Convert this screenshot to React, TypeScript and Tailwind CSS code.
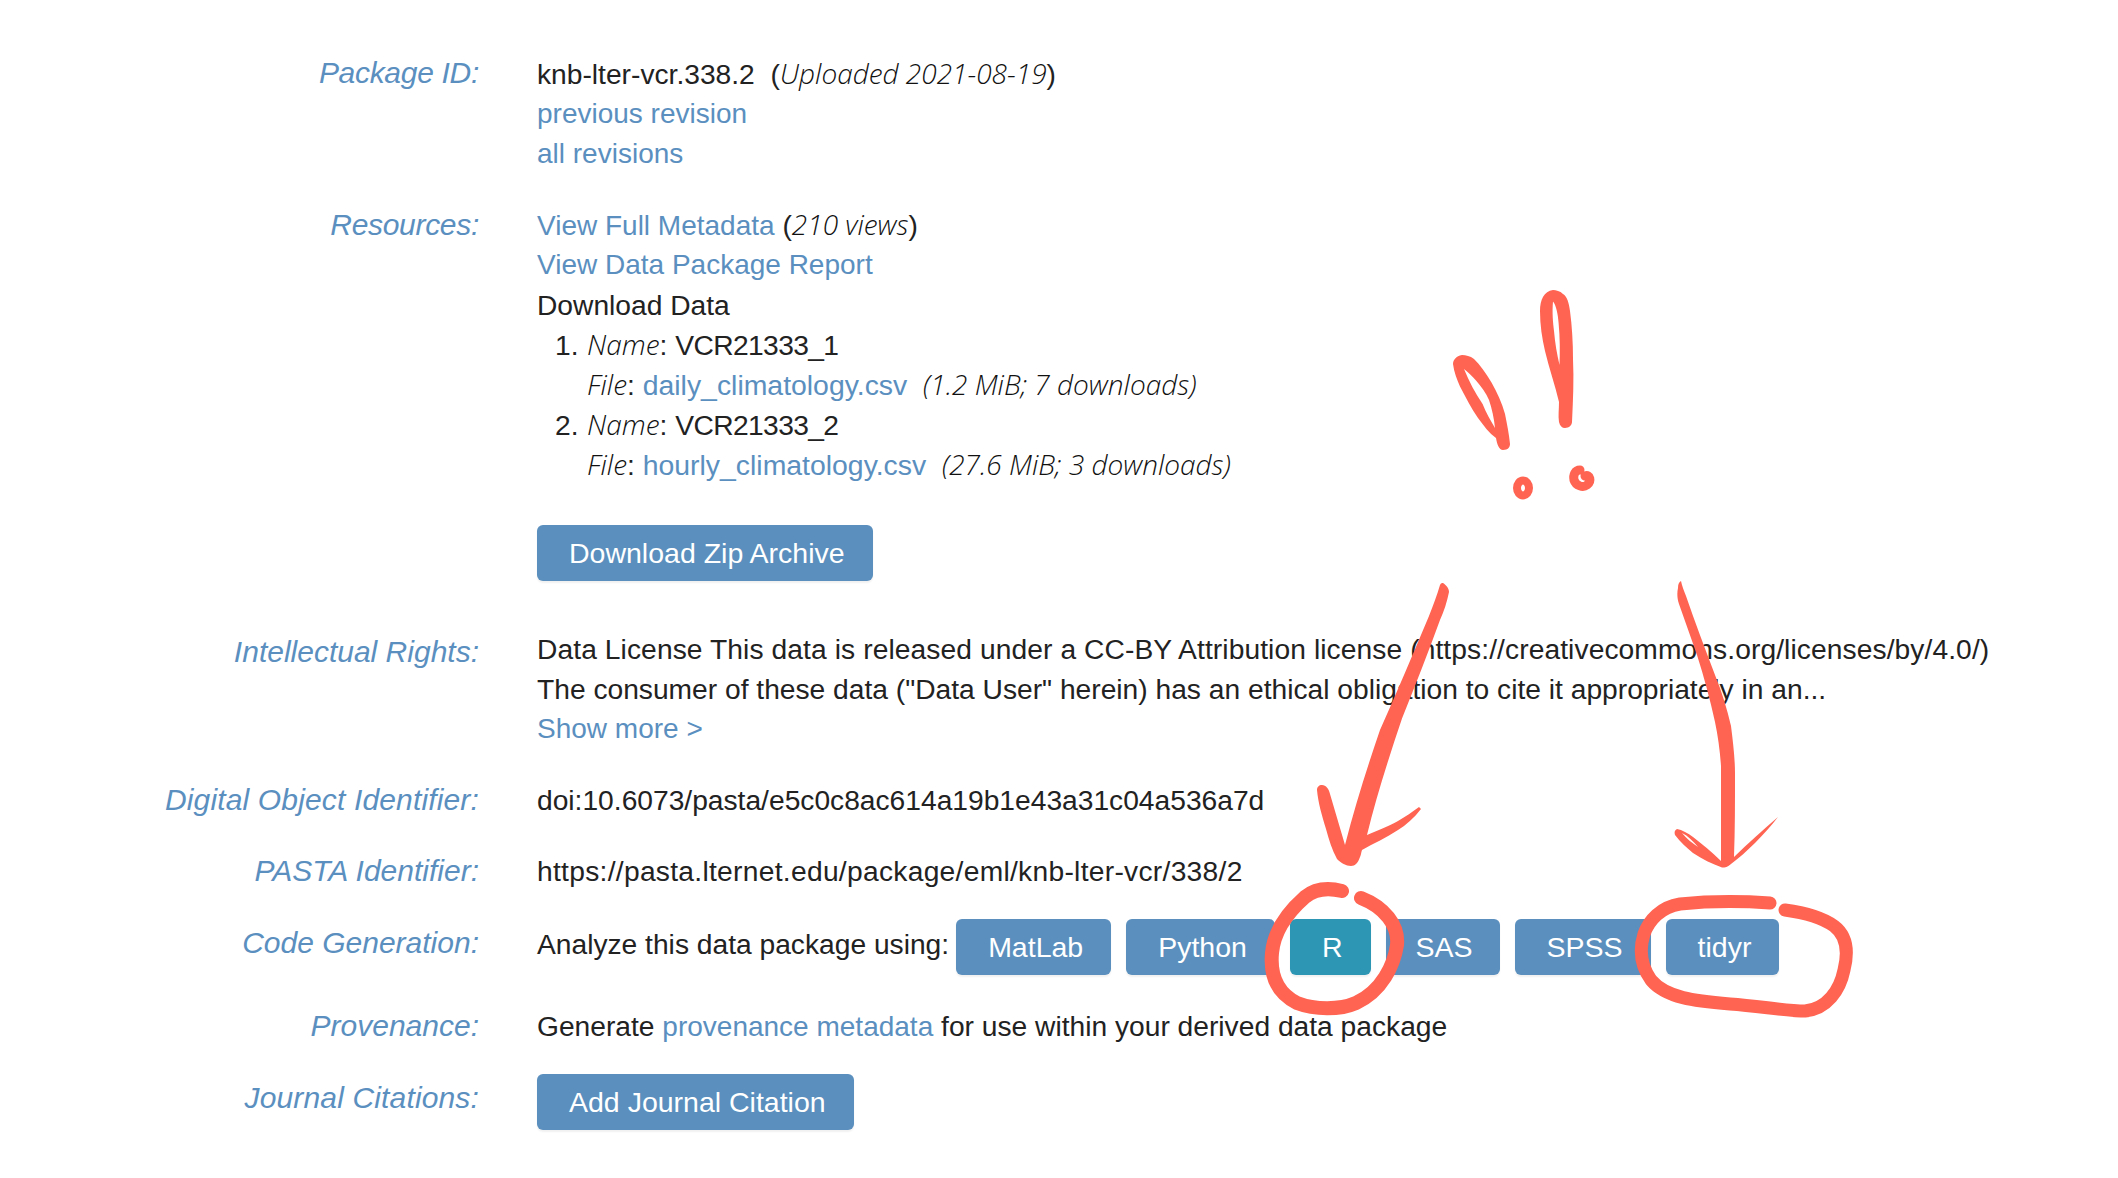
const linkBlock = "text-[28px] text-[#5a8fbf]";
const linkClass = "text-[28px] leading-none text-[#5a8fbf]";
const fileLink = "text-[28.4px] leading-none text-[#5a8fbf]";
const noteClass = "font-['Open_Sans',sans-serif] text-[28px] font-light italic leading-none text-[#111]";

const Label = ({ children, className = "" }: { children: string; className?: string }) => (
  <div className={`w-[479px] shrink-0 text-right text-[30px] italic text-[#5a8fbf] ${className}`}>{children}</div>
);

const Row = ({
  label,
  className,
  labelClass,
  children,
}: {
  label: string;
  className: string;
  labelClass?: string;
  children: React.ReactNode;
}) => (
  <div className={`flex gap-[58px] ${className}`}>
    <Label className={labelClass}>{label}</Label>
    <div className="min-w-0 flex-1 whitespace-nowrap">{children}</div>
  </div>
);

const ActionButton = ({
  children,
  active,
  className = "pl-[32px] pr-[28px]",
}: {
  children: string;
  active?: boolean;
  className?: string;
}) => (
  <button
    className={`h-14 rounded-md text-[28.5px] text-white shadow-[0_2px_2px_rgba(0,0,0,0.06)] ${className} ${
      active ? "bg-[#2e96b5]" : "bg-[#5a8fbe]"
    }`}
  >
    {children}
  </button>
);

// hand drawn marks on top of the page
const Scribbles = () => (
  <svg className="pointer-events-none absolute left-0 top-0" width="2118" height="1178" viewBox="0 0 2118 1178">
    <g fill="#ff6352" fillRule="evenodd">
      <path d="M1553 290C1544 291 1540 300 1540 311C1540 325 1542 338 1545 351C1549 368 1555 385 1559 402C1559 409 1558 416 1559 422C1560 426 1562 428 1565 428C1569 428 1572 425 1572 422C1573 400 1574 380 1573 359C1573 343 1572 326 1570 311C1569 303 1567 296 1563 294C1560 291 1556 290 1553 290ZM1553 301.5C1552 313 1553 322 1554 331C1555 343 1557 354 1559.5 365C1560 352 1560 338 1558.6 323C1558 314 1556 305 1553 301.5Z" />
      <path d="M1462 355C1456 356 1453 360 1453 364C1454 372 1457 380 1460 386.5C1466 398 1471 408 1478 418C1484 426 1489 433 1496 438C1497 444 1499 450 1503 450C1508 450 1510 447 1510 444C1509 434 1507 424 1505 414C1502 403 1497 392 1491.5 382.5C1486 373 1480 365 1474 359C1470 356 1466 355 1462 355ZM1464 369C1469 381 1475 393 1482.6 404C1486 413 1491 421 1495 428C1494 418 1492 409 1489 400C1486 393 1481 386 1476 380.5C1472 376 1468 372 1464 369Z" />
      <path d="M1443 583C1446 585 1449 588 1449 592C1447 602 1444 611 1440 620C1428 653 1415 686 1402 718.5C1389 757 1376 798 1367 835C1378 830 1390 826 1398 821C1405 817 1412 812 1419 807L1421 809C1414 818 1406 825 1398 830C1386 838 1374 843 1362 850C1361 853 1361 855 1360 857C1358 863 1355 866 1351 866C1346 866 1341 863 1337 859C1332 850 1329 840 1326 829C1322 816 1318 802 1317 790C1317 787 1319 785 1322 785C1326 785 1329 789 1330 794C1335 811 1340 828 1345 845C1355 806 1367 768 1380 730C1397 692 1413 654 1429 616C1433 606 1437 595 1440 585C1441 583 1442 583 1443 583Z" />
      <path d="M1681 581C1682 586 1684 591 1686 596C1695 622 1705 649 1715 675C1722 692 1727 709 1731 726C1733 742 1735 758 1735 774C1735 802 1735 829 1734 857C1748 843 1763 830 1778 817C1764 835 1747 852 1731 864C1728 867 1725 867.5 1722 867.5C1712 864 1702 859 1693 853C1687 848 1680 842 1675 835C1674 832 1675 830 1677 829C1682 830 1688 833 1693 837C1702 844 1712 852 1721 861C1721 829 1721 798 1721 766C1720 751 1718 736 1715 722C1710 699 1704 677 1697 655C1691 638 1685 621 1679 604C1677 598 1677 593 1678 588C1678 584 1679 582 1681 581ZM1682 833C1686 838 1692 843 1698 847C1693 841 1688 836 1682 833Z" />
    </g>
    <g fill="none" stroke="#ff6352" strokeLinecap="round" strokeLinejoin="round">
      <ellipse cx="1523" cy="488" rx="6" ry="7.5" strokeWidth="8" />
      <path d="M1580 470C1575 470 1573 475 1574 480C1576 486 1583 488 1587 485C1592 481 1590 474 1585 476" strokeWidth="9" />
      <path
        d="M1342 891C1330 888 1316 888 1305 897C1288 912 1274 930 1272 953C1270 975 1277 993 1297 1003C1315 1010 1340 1010 1356 1003C1382 991 1394 965 1397 945C1399 925 1384 907 1361 898"
        strokeWidth="14"
      />
      <path
        d="M1770 903C1740 901 1710 901 1680 904C1661 907 1649 920 1644 934C1639 950 1641 966 1651 980C1666 998 1695 1001 1730 1004C1760 1006 1785 1011 1805 1011C1827 1009 1840 990 1844 970C1849 950 1846 935 1834 926C1820 916 1800 912 1785 910"
        strokeWidth="13"
      />
    </g>
  </svg>
);

export default function App() {
  return (
    <div className="relative h-[1178px] w-[2118px] overflow-hidden bg-white pt-[54px] font-['Liberation_Sans',sans-serif] text-[28.2px] leading-[40px] text-[#222]">
      <Row label="Package ID:" className="" labelClass="mt-[-1px] tracking-[-0.3px]">
        <div>
          knb-lter-vcr.338.2&nbsp;&nbsp;(<span className={noteClass}>Uploaded 2021-08-19</span>)
        </div>
        <div className={linkBlock}>previous revision</div>
        <div className={linkBlock}>all revisions</div>
      </Row>

      <Row label="Resources:" className="mt-[31px]" labelClass="tracking-[-0.3px]">
        <div>
          <span className={linkClass}>View Full Metadata</span> (<span className={noteClass}>210 views</span>)
        </div>
        <div className={linkBlock}>View Data Package Report</div>
        <div>Download Data</div>
        <ol className="pl-[50px]">
          <li className="relative">
            <span className="absolute left-[-32px]">1.</span>
            <span className={noteClass}>Name</span>: <span className="tracking-[-0.6px]">VCR21333_1</span>
            <div>
              <span className={noteClass}>File</span>: <span className={fileLink}>daily_climatology.csv</span>
              &nbsp;&nbsp;<span className={noteClass}>(1.2 MiB; 7 downloads)</span>
            </div>
          </li>
          <li className="relative">
            <span className="absolute left-[-32px]">2.</span>
            <span className={noteClass}>Name</span>: <span className="tracking-[-0.6px]">VCR21333_2</span>
            <div>
              <span className={noteClass}>File</span>: <span className={fileLink}>hourly_climatology.csv</span>
              &nbsp;&nbsp;<span className={noteClass}>(27.6 MiB; 3 downloads)</span>
            </div>
          </li>
        </ol>
        <div className="mt-10 flex">
          <ActionButton>Download Zip Archive</ActionButton>
        </div>
      </Row>

      <Row label="Intellectual Rights:" className="mt-[48px]" labelClass="pt-[3px]">
        <div className="tracking-[0.09px]">
          Data License This data is released under a CC-BY Attribution license (https://creativecommons.org/licenses/by/4.0/)
        </div>
        <div>The consumer of these data ("Data User" herein) has an ethical obligation to cite it appropriately in an...</div>
        <div className={linkBlock}>Show more &gt;</div>
      </Row>

      <Row label="Digital Object Identifier:" className="mt-[31px]" labelClass="tracking-[0.15px]">
        doi:10.6073/pasta/e5c0c8ac614a19b1e43a31c04a536a7d
      </Row>

      <Row label="PASTA Identifier:" className="mt-[31px]">
        <div className="tracking-[0.29px]">https://pasta.lternet.edu/package/eml/knb-lter-vcr/338/2</div>
      </Row>

      <div className="mt-[28px] flex items-start gap-[58px]">
        <Label className="pt-[4px]">Code Generation:</Label>
        <div className="flex items-start gap-[15px] whitespace-nowrap">
          <span className="mr-[-8px] pt-[5px]">Analyze this data package using:</span>
          <ActionButton>MatLab</ActionButton>
          <ActionButton>Python</ActionButton>
          <ActionButton active>R</ActionButton>
          <ActionButton className="pl-[30px] pr-[27px]">SAS</ActionButton>
          <ActionButton>SPSS</ActionButton>
          <ActionButton>tidyr</ActionButton>
        </div>
      </div>

      <Row label="Provenance:" className="mt-[31px]">
        Generate <span className={linkClass}>provenance metadata</span> for use within your derived data package
      </Row>

      <div className="mt-[28px] flex items-start gap-[58px]">
        <Label className="pt-[4px] tracking-[0.15px]">Journal Citations:</Label>
        <ActionButton>Add Journal Citation</ActionButton>
      </div>

      <Scribbles />
    </div>
  );
}
